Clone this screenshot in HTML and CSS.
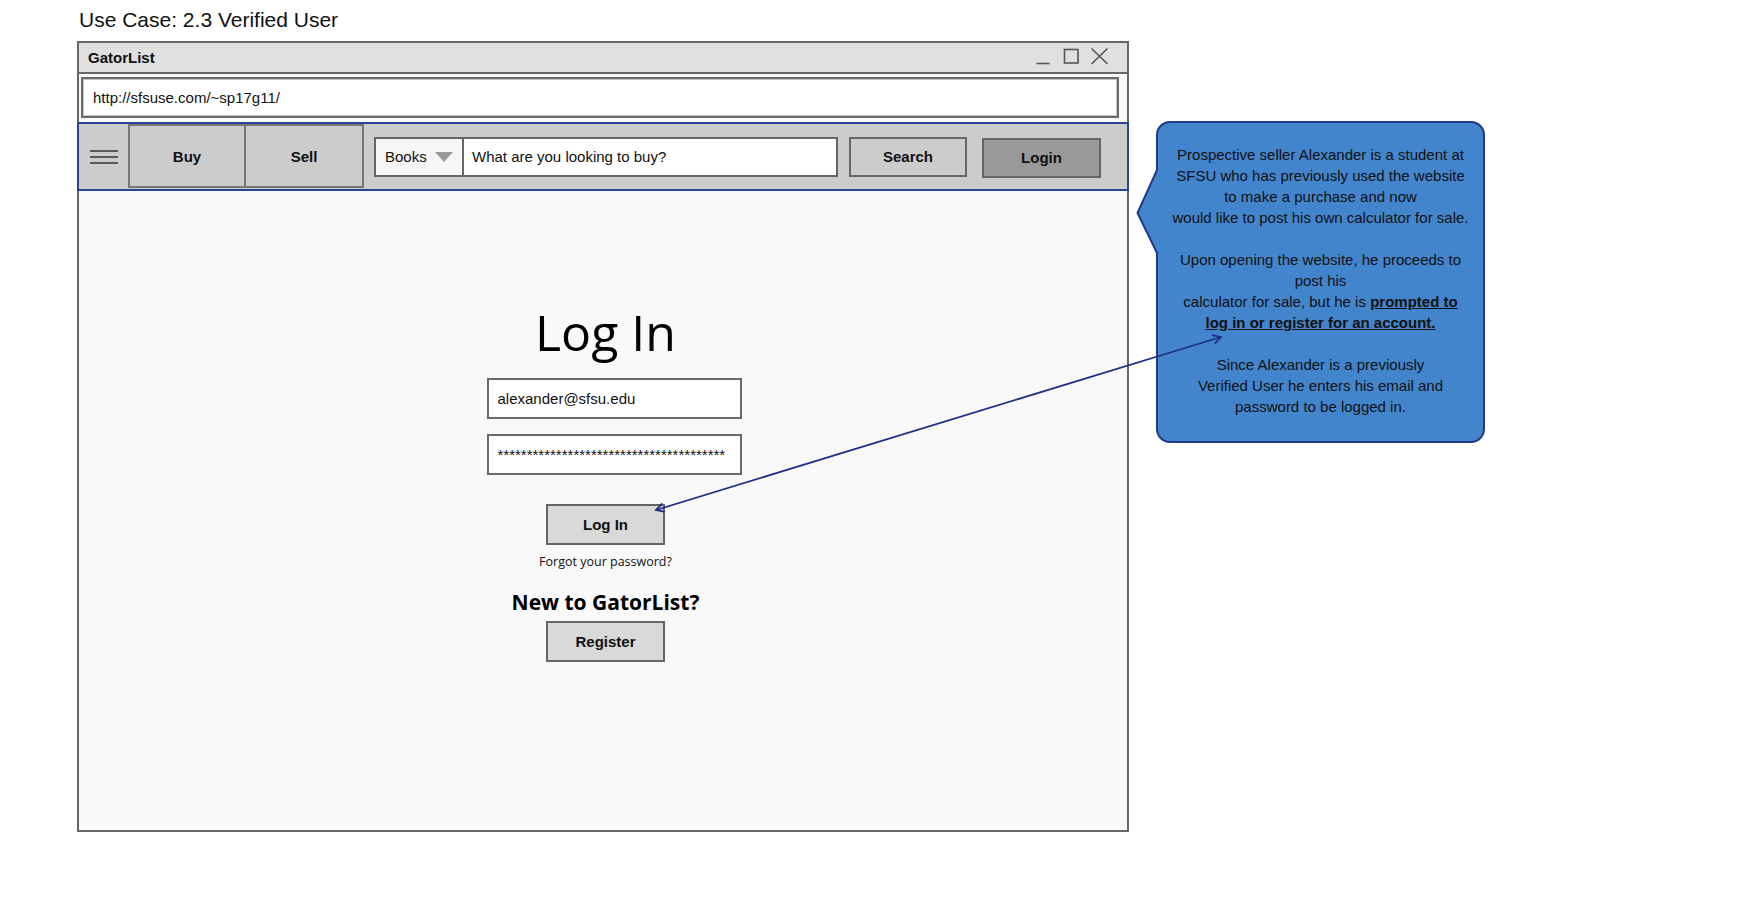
FILE: index.html
```html
<!DOCTYPE html>
<html lang="en">
<head>
<meta charset="utf-8">
<title>Use Case: 2.3 Verified User</title>
<link rel="stylesheet" href="styles.css">
</head>
<body>
<div class="page">
  <div class="title">Use Case: 2.3 Verified User</div>
  <div class="board">
    <div class="window">
      <div class="titlebar">
        <span class="app-name">GatorList</span>
        <svg class="win-controls" width="73" height="20" viewBox="0 0 73 20">
          <line x1="0.5" y1="17.5" x2="13.5" y2="17.5" stroke="#555" stroke-width="1.6"/>
          <rect x="28.5" y="3.5" width="13.5" height="13.5" fill="none" stroke="#555" stroke-width="1.6"/>
          <line x1="55.5" y1="2.5" x2="71.5" y2="18" stroke="#555" stroke-width="1.6"/>
          <line x1="71.5" y1="2.5" x2="55.5" y2="18" stroke="#555" stroke-width="1.6"/>
        </svg>
      </div>
      <div class="urlbar">http://sfsuse.com/~sp17g11/</div>
      <nav class="navbar">
        <div class="menu"><span></span><span></span><span></span></div>
        <div class="tab">Buy</div>
        <div class="tab tab-sell">Sell</div>
        <div class="search">
          <div class="category">Books
            <svg width="18" height="10" viewBox="0 0 18 10"><polygon points="0,0 18,0 9,10" fill="#9a9a9a"/></svg>
          </div>
          <div class="query">What are you looking to buy?</div>
        </div>
        <div class="btn btn-search">Search</div>
        <div class="btn btn-login">Login</div>
      </nav>
      <main class="content">
        <h1 class="login-title">Log In</h1>
        <div class="field">alexander@sfsu.edu</div>
        <div class="field field-pw">***************************************</div>
        <div class="action action-login">Log In</div>
        <div class="forgot">Forgot your password?</div>
        <h2 class="new-title">New to GatorList?</h2>
        <div class="action action-register">Register</div>
      </main>
    </div>
    <aside class="callout">
      <svg class="callout-shape" width="349" height="322" viewBox="0 0 349 322">
        <path d="M34 1 H335 A13 13 0 0 1 348 14 V308 A13 13 0 0 1 335 321 H34 A13 13 0 0 1 21 308 V132 L1.5 92 L21 49 V14 A13 13 0 0 1 34 1 Z" fill="#4385cc" stroke="#22398a" stroke-width="2"/>
      </svg>
      <div class="callout-text">
        Prospective seller Alexander is a student at<br>
        SFSU who has previously used the website<br>
        to make a purchase and now<br>
        would like to post his own calculator for sale.<br>
        <br>
        Upon opening the website, he proceeds to<br>
        post his<br>
        calculator for sale, but he is <strong>prompted to<br>
        log in or register for an account.</strong><br>
        <br>
        Since Alexander is a previously<br>
        Verified User he enters his email and<br>
        password to be logged in.
      </div>
    </aside>
  </div>
  <svg class="connector" width="1747" height="899" viewBox="0 0 1747 899">
    <defs>
      <marker id="head" viewBox="0 0 12 12" refX="10" refY="6" markerWidth="12" markerHeight="12" markerUnits="userSpaceOnUse" orient="auto-start-reverse">
        <path d="M2 1.5 L10 6 L2 10.5" fill="none" stroke="#1e2f87" stroke-width="1.8"/>
      </marker>
    </defs>
    <line x1="656" y1="510" x2="1221" y2="337" stroke="#1e2f87" stroke-width="1.8" marker-start="url(#head)" marker-end="url(#head)"/>
  </svg>
</div>
</body>
</html>
```

FILE: styles.css
```css
* {
  box-sizing: border-box;
}

html, body {
  margin: 0;
  padding: 0;
  background: #ffffff;
}

body {
  font-family: "Liberation Sans", Arial, sans-serif;
  color: #111;
}

.page {
  position: relative;
  width: 1747px;
  height: 899px;
  overflow: hidden;
}

.title {
  padding: 7px 0 0 79px;
  font-size: 21px;
  line-height: 25px;
  color: #111;
}

.board {
  display: flex;
  align-items: flex-start;
  padding-left: 77px;
  margin-top: 9px;
}

.window {
  width: 1052px;
  height: 791px;
  border: 2px solid #666;
  background: #f9f9f9;
  display: flex;
  flex-direction: column;
  flex-shrink: 0;
}

.titlebar {
  height: 31px;
  background: #e0e0e0;
  border-bottom: 2px solid #666;
  display: flex;
  align-items: center;
  padding-left: 9px;
}

.app-name {
  font-weight: bold;
  font-size: 15px;
}

.win-controls {
  margin-left: auto;
  margin-right: 18px;
  align-self: flex-start;
  margin-top: 3px;
}

.urlbar {
  height: 41px;
  margin: 3px 8px 0 2px;
  border: 2px solid #6a6a6a;
  box-shadow: inset 0 0 0 1px #c4c4c4;
  background: #fff;
  display: flex;
  align-items: center;
  padding-left: 10px;
  font-size: 15px;
}

.navbar {
  height: 69px;
  margin: 4px -2px 0;
  border: 2px solid #2b4491;
  background: #cccccc;
  display: flex;
  align-items: center;
}

.menu {
  width: 49px;
  display: flex;
  flex-direction: column;
  align-items: center;
  gap: 4px;
}

.menu span {
  display: block;
  width: 28px;
  height: 2px;
  background: #5a5a5a;
}

.tab {
  align-self: stretch;
  margin-bottom: 1px;
  width: 118px;
  border: 2px solid #777;
  background: #cccccc;
  display: flex;
  align-items: center;
  justify-content: center;
  font-weight: bold;
  font-size: 15px;
}

.tab-sell {
  width: 118px;
  border-left: none;
}

.search {
  margin-left: 10px;
  width: 464px;
  height: 40px;
  border: 2px solid #666;
  display: flex;
}

.category {
  width: 88px;
  border-right: 2px solid #666;
  background: #f6f6f6;
  display: flex;
  align-items: center;
  justify-content: space-between;
  padding: 0 9px;
  font-size: 15px;
}

.query {
  flex: 1;
  background: #fff;
  display: flex;
  align-items: center;
  padding-left: 8px;
  font-size: 15px;
}

.btn {
  height: 40px;
  border: 2px solid #666;
  display: flex;
  align-items: center;
  justify-content: center;
  font-weight: bold;
  font-size: 15px;
}

.btn-search {
  margin-left: 11px;
  width: 118px;
  background: #cccccc;
}

.btn-login {
  margin-left: 15px;
  margin-top: 2px;
  width: 119px;
  background: #999999;
}

.content {
  flex: 1;
  display: flex;
  flex-direction: column;
  align-items: center;
  padding-top: 111px;
  padding-left: 5px;
}

.login-title {
  margin: 0;
  font-family: "Open Sans", sans-serif;
  font-weight: 400;
  font-size: 50px;
  line-height: 60px;
  color: #000;
}

.field {
  margin-top: 16px;
  margin-left: 17px;
  width: 255px;
  height: 41px;
  border: 2px solid #6a6a6a;
  background: #fff;
  display: flex;
  align-items: center;
  padding-left: 9px;
  font-size: 15px;
}

.field-pw {
  margin-top: 15px;
}

.action {
  width: 119px;
  height: 41px;
  border: 2px solid #666;
  background: #d9d9d9;
  display: flex;
  align-items: center;
  justify-content: center;
  font-weight: bold;
  font-size: 15px;
}

.action-login {
  margin-top: 29px;
}

.forgot {
  margin-top: 9px;
  font-family: "Open Sans", sans-serif;
  font-size: 12.5px;
  line-height: 16px;
  color: #111;
}

.new-title {
  margin: 20px 0 0;
  font-family: "Open Sans", sans-serif;
  font-weight: 700;
  font-size: 21px;
  line-height: 24px;
  color: #000;
}

.action-register {
  margin-top: 7px;
}

.callout {
  position: relative;
  margin-left: 7px;
  margin-top: 80px;
  width: 349px;
  height: 322px;
  flex-shrink: 0;
}

.callout-shape {
  position: absolute;
  top: 0;
  left: 0;
}

.callout-text {
  position: relative;
  margin-left: 21px;
  width: 327px;
  padding-top: 23px;
  text-align: center;
  font-size: 15px;
  line-height: 21px;
  white-space: nowrap;
  color: #111;
}

.callout-text strong {
  text-decoration: underline;
}

.connector {
  position: absolute;
  top: 0;
  left: 0;
  pointer-events: none;
}
```
